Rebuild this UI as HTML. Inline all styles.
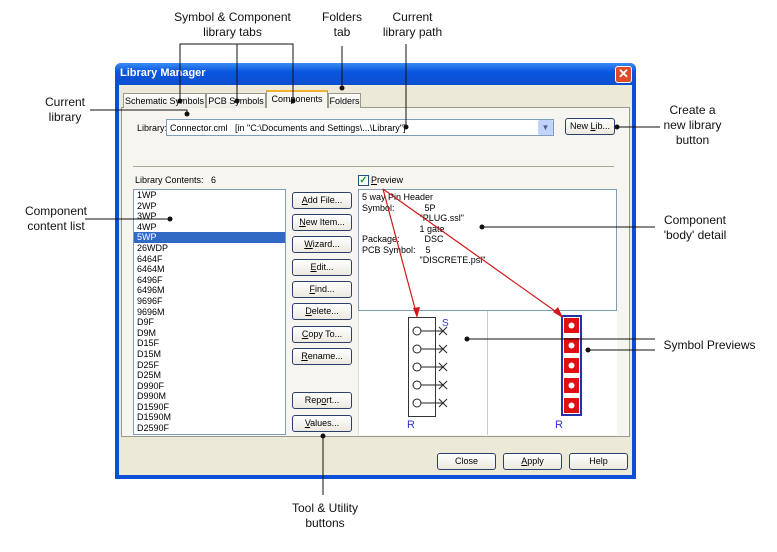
<!DOCTYPE html>
<html><head><style>
*{box-sizing:border-box;margin:0;padding:0}
body{width:777px;height:552px;background:#fff;font-family:"Liberation Sans",sans-serif;position:relative;overflow:hidden;font-size:9px;color:#000}
.a{position:absolute}
.ann{position:absolute;font-size:12px;text-align:center;line-height:15px;color:#111}
.btn{position:absolute;border:1px solid #2a3f6a;border-radius:3px;background:linear-gradient(#fff,#ece9df);font-size:9px;text-align:center;line-height:15px;height:17px}
.tab{position:absolute;border:1px solid #9a9a8c;border-bottom:none;background:linear-gradient(#fff,#ecebe4);font-size:9px;line-height:14px;text-align:center;height:15px}
.list div{height:10.6px;line-height:10.6px;padding-left:3px}
</style></head><body>
<div class="a" style="left:115px;top:63px;width:521px;height:416px;background:#0a4fd6;border-radius:6px 6px 0 0"></div>
<div class="a" style="left:115px;top:63px;width:521px;height:22px;background:linear-gradient(#3a8cf4,#0a56e0 40%,#0a4fd0);border-radius:6px 6px 0 0"></div>
<div class="a" style="left:120px;top:67px;color:#fff;font-weight:bold;font-size:11px">Library Manager</div>
<div class="a" style="left:615px;top:66px;width:17px;height:17px;background:#e04a2a;border:1px solid #fff;border-radius:3px;color:#fff;font-size:13px;line-height:14px;text-align:center;font-weight:bold">✕</div>
<div class="a" style="left:119px;top:85px;width:513px;height:390px;background:#ece9d8"></div>
<div class="a" style="left:121px;top:107px;width:509px;height:330px;border:1px solid #9a9a8c;background:#f6f5f0"></div>
<div class="tab" style="left:123px;top:93px;width:83px">Schematic Symbols</div>
<div class="tab" style="left:206px;top:93px;width:60px">PCB Symbols</div>
<div class="tab" style="left:266px;top:90px;width:62px;height:18px;background:#f6f5f0;border-top:2px solid #f0b030">Components</div>
<div class="tab" style="left:328px;top:93px;width:33px">Folders</div>
<div class="a" style="left:137px;top:123px">Library:</div>
<div class="a" style="left:166px;top:119px;width:388px;height:17px;border:1px solid #7f9db9;background:#fff;padding:3px 3px;white-space:pre">Connector.cml   [in "C:\Documents and Settings\...\Library"]</div>
<div class="a" style="left:538px;top:120px;width:15px;height:15px;background:#c1d3fb;color:#4d6185;font-size:8px;text-align:center;line-height:15px;border-radius:2px">▼</div>
<div class="btn" style="left:565px;top:118px;width:50px">New <u>L</u>ib...</div>
<div class="a" style="left:133px;top:166px;width:481px;height:1px;background:#aca899"></div>
<div class="a" style="left:135px;top:175px">Library Contents:&nbsp;&nbsp; 6</div>
<div class="a list" style="left:133px;top:189px;width:153px;height:246px;border:1px solid #7f9db9;background:#fff;padding-top:0">
<div>1WP</div><div>2WP</div><div>3WP</div><div>4WP</div><div style="background:#316ac5;color:#fff">5WP</div><div>26WDP</div><div>6464F</div><div>6464M</div><div>6496F</div><div>6496M</div><div>9696F</div><div>9696M</div><div>D9F</div><div>D9M</div><div>D15F</div><div>D15M</div><div>D25F</div><div>D25M</div><div>D990F</div><div>D990M</div><div>D1590F</div><div>D1590M</div><div>D2590F</div></div>
<div class="btn" style="left:292px;top:192px;width:60px"><u>A</u>dd File...</div>
<div class="btn" style="left:292px;top:214px;width:60px"><u>N</u>ew Item...</div>
<div class="btn" style="left:292px;top:236px;width:60px"><u>W</u>izard...</div>
<div class="btn" style="left:292px;top:259px;width:60px"><u>E</u>dit...</div>
<div class="btn" style="left:292px;top:281px;width:60px"><u>F</u>ind...</div>
<div class="btn" style="left:292px;top:303px;width:60px"><u>D</u>elete...</div>
<div class="btn" style="left:292px;top:326px;width:60px"><u>C</u>opy To...</div>
<div class="btn" style="left:292px;top:348px;width:60px"><u>R</u>ename...</div>
<div class="btn" style="left:292px;top:392px;width:60px">Rep<u>o</u>rt...</div>
<div class="btn" style="left:292px;top:415px;width:60px"><u>V</u>alues...</div>
<div class="a" style="left:358px;top:175px;width:11px;height:11px;border:1px solid #1c5180;background:#fff;color:#21a121;font-size:10px;line-height:9px;text-align:center;font-weight:bold">✓</div>
<div class="a" style="left:371px;top:175px"><u>P</u>review</div>
<div class="a" style="left:358px;top:189px;width:259px;height:122px;border:1px solid #7f9db9;background:#fff;padding:2px 3px;line-height:10.5px;white-space:pre">5 way Pin Header
Symbol:            5P
                       "PLUG.ssl"
                       1 gate
Package:          DSC
PCB Symbol:    5
                       "DISCRETE.psl"</div>
<div class="a" style="left:358px;top:311px;width:259px;height:124px;background:#fff;border-left:1px solid #ddd"></div>
<div class="a" style="left:487px;top:311px;width:1px;height:124px;background:#ccc"></div>
<div class="a" style="left:408px;top:317px;width:28px;height:100px;border:1px solid #333"></div>
<div class="a" style="left:407px;top:419px;color:#33c;font-size:11px">R</div>
<div class="a" style="left:442px;top:318px;color:#33c;font-size:10px">S</div>
<div class="a" style="left:561px;top:315px;width:21px;height:101px;border:2px solid #2233aa"></div>
<div class="a" style="left:555px;top:419px;color:#33c;font-size:11px">R</div>
<div class="btn" style="left:437px;top:453px;width:59px">Close</div>
<div class="btn" style="left:503px;top:453px;width:59px"><u>A</u>pply</div>
<div class="btn" style="left:569px;top:453px;width:59px">Help</div>
<svg class="a" style="left:0;top:0" width="777" height="552">
<g stroke="#222" fill="none" stroke-width="1">
<g id="p"><circle cx="417" cy="331" r="4"/><line x1="421" y1="331" x2="443" y2="331"/><line x1="439" y1="327" x2="447" y2="335"/><line x1="447" y1="327" x2="439" y2="335"/></g>
<use href="#p" y="18"/><use href="#p" y="36"/><use href="#p" y="54"/><use href="#p" y="72"/>
</g>
<g fill="#e01010"><rect x="564" y="318" width="15" height="15"/><rect x="564" y="338" width="15" height="15"/><rect x="564" y="358" width="15" height="15"/><rect x="564" y="378" width="15" height="15"/><rect x="564" y="398" width="15" height="15"/></g>
<g fill="#fff"><circle cx="571.5" cy="325.5" r="3"/><circle cx="571.5" cy="345.5" r="3"/><circle cx="571.5" cy="365.5" r="3"/><circle cx="571.5" cy="385.5" r="3"/><circle cx="571.5" cy="405.5" r="3"/></g>
<g stroke="#d01818" stroke-width="1.2"><line x1="383" y1="189" x2="417" y2="316"/><line x1="383" y1="189" x2="562" y2="316"/></g>
<g fill="#d01818"><polygon points="417,318 413,308 420,307"/><polygon points="563,318 553,312 558,307"/></g>
<g stroke="#111" stroke-width="1" fill="none">
<path d="M180 100V44H293V100M237 44V100"/><path d="M342 46V87"/><path d="M406 44V127"/>
<path d="M90 110H187V114"/><path d="M617 127H660"/><path d="M85 219H170"/><path d="M482 227H655"/>
<path d="M467 339H655"/><path d="M588 350H655"/><path d="M323 436V495"/>
</g>
<g fill="#111"><circle cx="180" cy="101" r="2.5"/><circle cx="237" cy="101" r="2.5"/><circle cx="293" cy="101" r="2.5"/><circle cx="342" cy="88" r="2.5"/><circle cx="406" cy="127" r="2.5"/><circle cx="187" cy="114" r="2.5"/><circle cx="617" cy="127" r="2.5"/><circle cx="170" cy="219" r="2.5"/><circle cx="482" cy="227" r="2.5"/><circle cx="467" cy="339" r="2.5"/><circle cx="588" cy="350" r="2.5"/><circle cx="323" cy="436" r="2.5"/></g>
</svg>
<div class="ann" style="left:150px;top:10px;width:165px">Symbol &amp; Component<br>library tabs</div>
<div class="ann" style="left:312px;top:10px;width:60px">Folders<br>tab</div>
<div class="ann" style="left:370px;top:10px;width:85px">Current<br>library path</div>
<div class="ann" style="left:25px;top:95px;width:80px">Current<br>library</div>
<div class="ann" style="left:650px;top:103px;width:85px">Create a<br>new library<br>button</div>
<div class="ann" style="left:10px;top:204px;width:92px">Component<br>content list</div>
<div class="ann" style="left:650px;top:213px;width:90px">Component<br>'body' detail</div>
<div class="ann" style="left:657px;top:338px;width:105px">Symbol Previews</div>
<div class="ann" style="left:280px;top:501px;width:90px">Tool &amp; Utility<br>buttons</div>
</body></html>
